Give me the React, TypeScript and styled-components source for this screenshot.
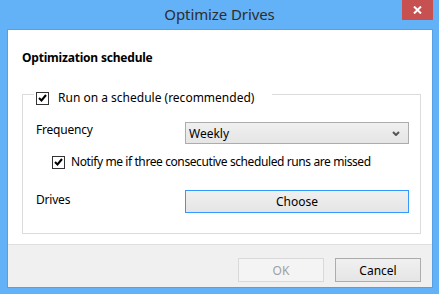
import React from "react";
import styled, { createGlobalStyle } from "styled-components";

const GlobalStyle = createGlobalStyle`
  *, *::before, *::after {
    box-sizing: border-box;
  }
  html, body {
    margin: 0;
    padding: 0;
    background: #63b1f6;
  }
  body {
    font-family: "Noto Sans", "Open Sans", sans-serif;
    font-size: 12px;
    color: #000;
  }
`;

const Frame = styled.div`
  width: 439px;
  height: 294px;
  display: flex;
  flex-direction: column;
  background: #63b1f6;
  padding: 0 6px 6px 7px;
`;

const TitleBar = styled.div`
  height: 29px;
  display: grid;
  grid-template-columns: 1fr auto 1fr;
  align-items: start;
  margin: 0 -6px 0 -7px;
`;

const Title = styled.div`
  grid-column: 2;
  font-size: 15px;
  line-height: 29px;
  color: #2d2d2d;
  letter-spacing: -0.1px;
`;

const CloseButton = styled.div`
  grid-column: 3;
  justify-self: end;
  margin-right: 6px;
  width: 31px;
  height: 20px;
  background: #c75050;
  display: flex;
  align-items: center;
  justify-content: center;
`;

const Client = styled.div`
  flex: 1;
  display: flex;
  flex-direction: column;
  border: 1px solid #579fe0;
  background: #fff;
`;

const Body = styled.div`
  flex: 1;
  padding: 20px 11px 0 14px;
`;

const Heading = styled.div`
  font-weight: bold;
  line-height: 16px;
  letter-spacing: -0.2px;
  margin-bottom: 28px;
`;

const Group = styled.div`
  border: 1px solid #dcdcdc;
  padding: 0 11px 20px 13px;
`;

const Legend = styled.label`
  display: flex;
  align-items: center;
  gap: 9px;
  width: fit-content;
  height: 14px;
  margin: -4px 0 0 -2px;
  padding: 0 18px 0 2px;
  background: #fff;
  line-height: 14px;
`;

const Box = styled.span`
  width: 13px;
  height: 13px;
  border: 1px solid #333;
  background: #fff;
  display: inline-flex;
  align-items: center;
  justify-content: center;
  flex: none;
`;

const Form = styled.div`
  display: grid;
  grid-template-columns: 149px 1fr;
  align-items: start;
  margin-top: 17px;
`;

const FieldLabel = styled.div<{ $top?: number }>`
  line-height: 16px;
  margin-top: ${(p) => p.$top ?? 0}px;
  letter-spacing: -0.2px;
`;

const Select = styled.div`
  height: 22px;
  border: 1px solid #acacac;
  background: linear-gradient(#f0f0f0, #e5e5e5);
  display: flex;
  align-items: center;
  justify-content: space-between;
  padding: 0 8px 0 3px;
`;

const CheckRow = styled.label<{ $top: number }>`
  grid-column: 1 / span 2;
  display: flex;
  align-items: center;
  gap: 6px;
  margin: ${(p) => p.$top}px 0 0 16px;
  line-height: 16px;
  letter-spacing: -0.4px;
`;

const Button = styled.div<{ $variant?: "default" | "disabled" }>`
  height: 24px;
  display: flex;
  align-items: center;
  justify-content: center;
  border: 1px solid
    ${(p) =>
      p.$variant === "default"
        ? "#3399ff"
        : p.$variant === "disabled"
        ? "#d9d9d9"
        : "#acacac"};
  background: ${(p) =>
    p.$variant === "disabled" ? "#f4f4f4" : "linear-gradient(#f0f0f0, #e5e5e5)"};
  color: ${(p) => (p.$variant === "disabled" ? "#a0a0a0" : "#000")};
`;

const ChooseButton = styled(Button)`
  height: 23px;
  margin-top: 20px;
`;

const Footer = styled.div`
  height: 43px;
  border-top: 1px solid #dfdfdf;
  background: #f0f0f0;
  display: flex;
  justify-content: flex-end;
  gap: 11px;
  padding: 13px 11px 0 0;
`;

const FooterButton = styled(Button)`
  width: 86px;
`;

const Check = () => (
  <svg width="9" height="8" viewBox="0 0 9 8">
    <path d="M1 4 L3.5 6.5 L8 1" fill="none" stroke="#000" strokeWidth="2" />
  </svg>
);

export default function App() {
  return (
    <>
      <GlobalStyle />
      <Frame>
        <TitleBar>
          <Title>Optimize Drives</Title>
          <CloseButton>
            <svg width="9" height="8" viewBox="0 0 9 8">
              <path d="M1 0.5 L8 7.5 M8 0.5 L1 7.5" stroke="#fff" strokeWidth="2" />
            </svg>
          </CloseButton>
        </TitleBar>
        <Client>
          <Body>
            <Heading>Optimization schedule</Heading>
            <Group>
              <Legend>
                <Box>
                  <Check />
                </Box>
                Run on a schedule (recommended)
              </Legend>
              <Form>
                <FieldLabel>Frequency</FieldLabel>
                <Select>
                  <span>Weekly</span>
                  <svg width="8" height="5" viewBox="0 0 8 5">
                    <path d="M1 1 L4 4 L7 1" fill="none" stroke="#555" strokeWidth="2" />
                  </svg>
                </Select>
                <CheckRow $top={10}>
                  <Box>
                    <Check />
                  </Box>
                  Notify me if three consecutive scheduled runs are missed
                </CheckRow>
                <FieldLabel $top={22}>Drives</FieldLabel>
                <ChooseButton $variant="default">Choose</ChooseButton>
              </Form>
            </Group>
          </Body>
          <Footer>
            <FooterButton $variant="disabled">OK</FooterButton>
            <FooterButton>Cancel</FooterButton>
          </Footer>
        </Client>
      </Frame>
    </>
  );
}
